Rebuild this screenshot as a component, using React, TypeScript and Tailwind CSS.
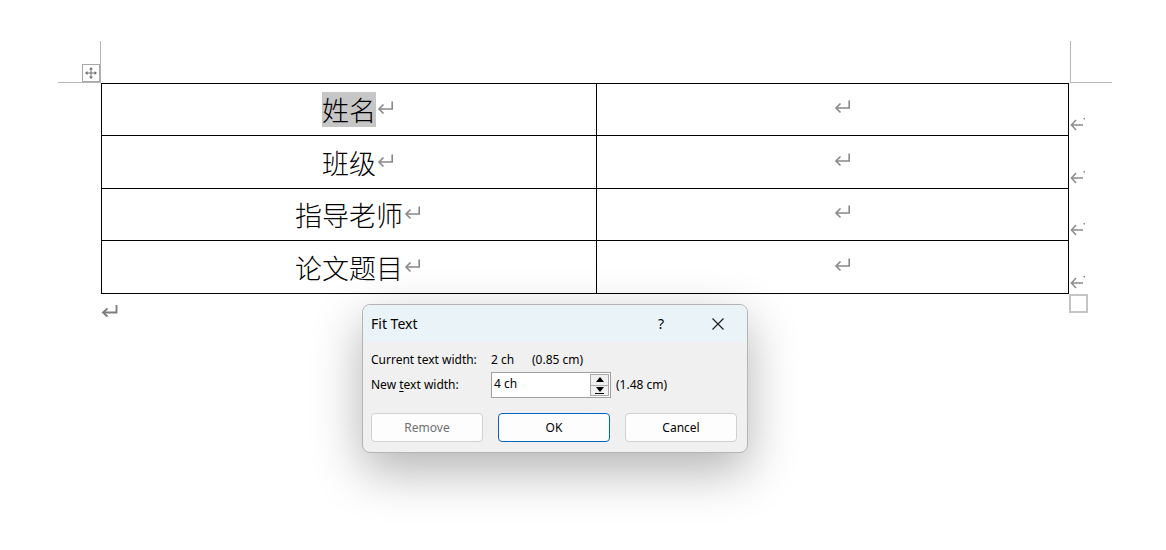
import React from "react";

const ParaMark = ({ className = "" }: { className?: string }) => (
  <svg width="17" height="15" viewBox="0 0 17 15" fill="none" stroke="#888888" strokeWidth="1.6" className={className}>
    <path d="M15.2 1.5 V9 H2" />
    <path d="M6.5 4.5 L2 9 L6.5 13.5" />
  </svg>
);

const RowEndMark = () => (
  <svg width="16" height="15" viewBox="0 0 16 15" fill="none" stroke="#8a8a8a" strokeWidth="1.5">
    <path d="M6 3 L1.5 8 L6 13" />
    <path d="M1.5 8 H13" />
    <rect x="13.5" y="1" width="1.5" height="1.5" fill="#8a8a8a" stroke="none" />
  </svg>
);

const MoveHandle = () => (
  <div className="w-[18px] h-[18px] border border-[#a8a8a8] bg-white flex items-center justify-center">
    <svg width="12" height="12" viewBox="0 0 12 12" fill="#6e6e6e" stroke="#6e6e6e" strokeWidth="1">
      <path d="M6 1 V11 M1 6 H11" fill="none" />
      <path d="M6 0 L4 2.5 H8 Z M6 12 L4 9.5 H8 Z M0 6 L2.5 4 V8 Z M12 6 L9.5 4 V8 Z" stroke="none" />
    </svg>
  </div>
);

const rows = [
  { label: "姓名", h: "h-[53px]", top: true, hl: true },
  { label: "班级", h: "h-[53px]", top: false, hl: false },
  { label: "指导老师", h: "h-[52px]", top: false, hl: false },
  { label: "论文题目", h: "h-[53px]", top: false, hl: false },
];

export default function App() {
  const cjk = { fontFamily: '"Noto Sans CJK SC", "Noto Sans", sans-serif' };
  const ui = { fontFamily: '"Noto Sans", "Liberation Sans", sans-serif' };
  return (
    <div className="w-[1166px] h-[550px] bg-white relative overflow-hidden">
      {/* top crop marks */}
      <div className="flex h-[83px]">
        <div className="w-[101px] flex flex-col">
          <div className="h-[82px] flex justify-end items-end">
            <MoveHandle />
            <div className="w-px h-[41px] bg-[#b4b4b4]" />
          </div>
          <div className="h-px ml-[58px] w-[43px] bg-[#b4b4b4]" />
        </div>
        <div className="w-[969px]" />
        <div className="flex flex-col">
          <div className="h-[82px] flex items-end">
            <div className="w-px h-[41px] bg-[#b4b4b4]" />
          </div>
          <div className="h-px w-[42px] bg-[#b4b4b4]" />
        </div>
      </div>

      {/* table */}
      <div className="ml-[101px] grid grid-cols-[496px_472px_30px]" style={cjk}>
        {rows.map((r, i) => (
          <React.Fragment key={i}>
            <div
              className={`${r.h} border-l border-r border-b border-black ${r.top ? "border-t" : ""} flex items-center justify-center text-[27px] font-light text-black`}
            >
              <span className="inline-flex items-center">
                <span className={`inline-block leading-[35px] ${r.hl ? "bg-[#c6c6c6]" : ""}`}>{r.label}</span>
                <ParaMark className="ml-[1px] -mr-[18px] mb-[4px]" />
              </span>
            </div>
            <div
              className={`${r.h} border-r border-b border-black ${r.top ? "border-t" : ""} flex items-center justify-center`}
            >
              <span className="inline-flex items-center pl-[2px] mb-[6px]">
                <ParaMark className="-mr-[17px]" />
              </span>
            </div>
            <div className={`${r.h} flex items-end pb-[4px] pl-[1px] overflow-hidden`}>
              <RowEndMark />
            </div>
          </React.Fragment>
        ))}
        <div className="pt-[10px]">
          <svg width="17" height="14" viewBox="0 0 17 14" fill="none" stroke="#7c7c7c" strokeWidth="1.8">
            <path d="M15.5 1 V8.5 H2" />
            <path d="M6.5 4.5 L2 8.5 L6.5 12.5" />
          </svg>
        </div>
        <div />
        <div>
          <div className="w-[19px] h-[19px] border-2 border-[#c4c4c4]" />
        </div>
      </div>

      {/* Fit Text dialog */}
      <div
        className="absolute left-[362px] top-[304px] w-[386px] rounded-[8px] border border-[#b4b4b4] bg-[#f0f0f0] overflow-hidden shadow-[0_18px_50px_rgba(0,0,0,0.30)] text-[12px] text-black"
        style={ui}
      >
        <div className="h-[37px] bg-[#eaf3f7] flex items-center pl-[8px] pr-[23px]">
          <span className="flex-1 text-[14px]">Fit Text</span>
          <span className="text-[14px] leading-none">?</span>
          <svg width="12" height="12" viewBox="0 0 12 12" className="ml-[48px]" stroke="#1a1a1a" strokeWidth="1.1">
            <path d="M0.5 0.5 L11.5 11.5 M11.5 0.5 L0.5 11.5" />
          </svg>
        </div>
        <div className="px-[8px] pt-[9px] pb-[10px]">
          <div className="h-[18px] flex items-center">
            <span className="w-[120px]">Current text width:</span>
            <span className="w-[41px]">2 ch</span>
            <span>(0.85 cm)</span>
          </div>
          <div className="mt-[3px] h-[26px] flex items-center">
            <span className="w-[120px]">
              New <span className="underline underline-offset-2">t</span>ext width:
            </span>
            <div className="w-[120px] h-[26px] border border-[#a0a0a0] bg-white flex">
              <span className="flex-1 pl-[2px] leading-[22px]">4 ch</span>
              <div className="w-[21px] flex flex-col p-px">
                <div className="flex-1 border border-[#a8a8a8] bg-[#f0f0f0] flex items-center justify-center">
                  <svg width="8" height="5" viewBox="0 0 8 5"><path d="M4 0 L8 5 H0 Z" fill="#000" /></svg>
                </div>
                <div className="flex-1 border border-[#a8a8a8] border-t-0 bg-[#f0f0f0] flex flex-col items-center justify-center gap-px">
                  <svg width="8" height="5" viewBox="0 0 8 5"><path d="M0 0 H8 L4 5 Z" fill="#000" /></svg>
                  <div className="w-[9px] h-px bg-black" />
                </div>
              </div>
            </div>
            <span className="ml-[5px]">(1.48 cm)</span>
          </div>
          <div className="mt-[15px] flex gap-[15px]">
            <button className="w-[112px] h-[29px] rounded-[4px] border border-[#d2d2d2] bg-[#fdfdfd] text-[#707070] text-[12px]">
              Remove
            </button>
            <button className="w-[112px] h-[29px] rounded-[4px] border border-[#0067c0] bg-[#fdfdfd] text-black text-[12px]">
              OK
            </button>
            <button className="w-[112px] h-[29px] rounded-[4px] border border-[#d0d0d0] bg-[#fdfdfd] text-black text-[12px]">
              Cancel
            </button>
          </div>
        </div>
      </div>
    </div>
  );
}
